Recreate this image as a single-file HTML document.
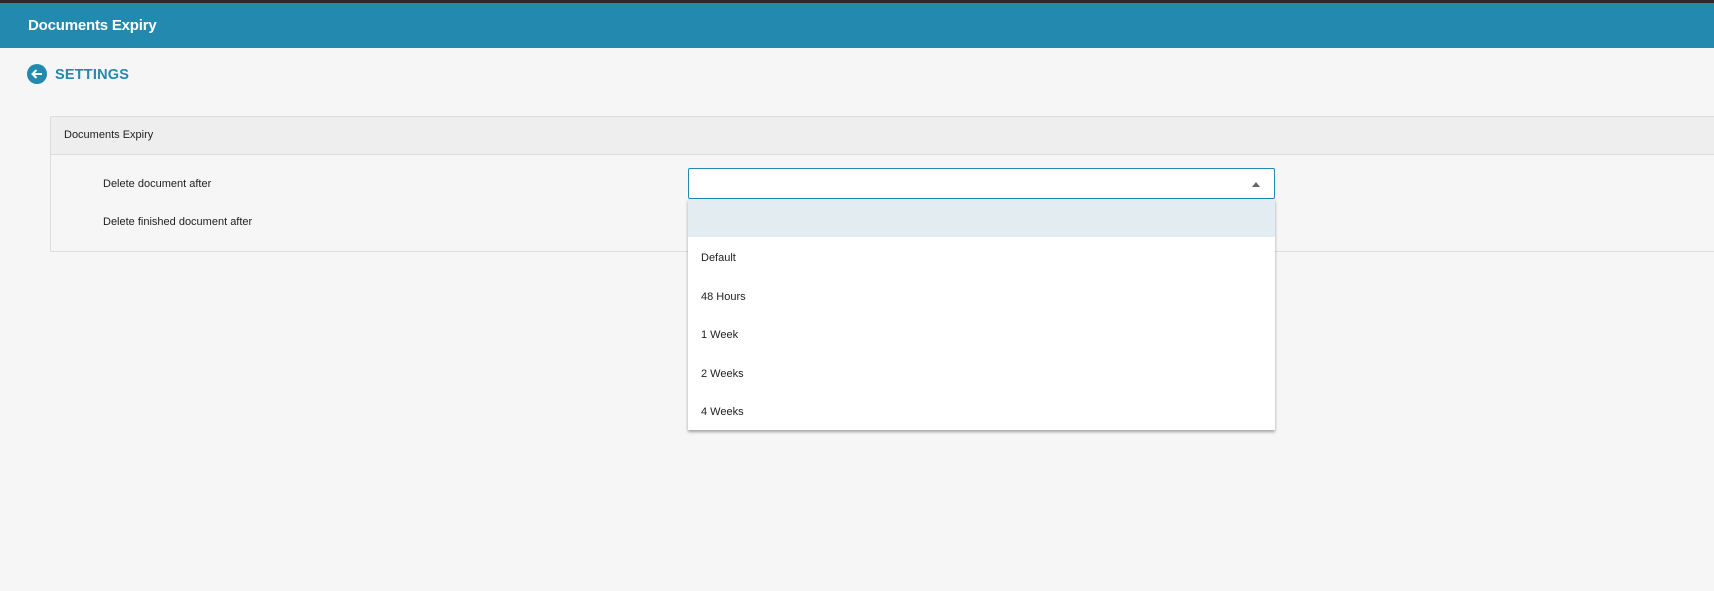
<!DOCTYPE html>
<html><head><meta charset="utf-8"><style>
*{box-sizing:border-box;margin:0;padding:0}
body{width:1714px;height:591px;background:#f6f6f6;font-family:"Liberation Sans",sans-serif;position:relative;overflow:hidden;color:#222}
.top{position:absolute;left:0;top:0;width:1714px;height:3px;background:#2b2b2b}
.hdr{position:absolute;left:0;top:3px;width:1714px;height:45px;background:#2389ae}
.hdr span{position:absolute;left:28px;top:14px;color:#fff;font-size:15px;font-weight:bold;letter-spacing:-0.2px}
.back{position:absolute;left:27px;top:64px;width:20px;height:20px;border-radius:50%;background:#2389ae}
.set{position:absolute;left:55px;top:67px;color:#2389ae;font-size:14.5px;font-weight:bold;letter-spacing:0.2px}
.panel{position:absolute;left:50px;top:116px;width:1680px;height:136px;border:1px solid #ddd;border-radius:2px;background:#f6f6f6}
.ph{height:38px;background:#eeeeee;border-bottom:1px solid #ddd;font-size:11px;padding:12px 0 0 13px}
.lbl{position:absolute;left:52px;font-size:11px}
.sel{position:absolute;left:688px;top:168px;width:587px;height:31px;border:1px solid #2389ae;border-radius:2px;background:#fff}
.sel i{position:absolute;right:14px;top:13px;width:0;height:0;border-left:4px solid transparent;border-right:4px solid transparent;border-bottom:5px solid #666}
.dd{position:absolute;left:688px;top:199px;width:587px;height:231px;background:#fff;box-shadow:0 2px 3px rgba(0,0,0,.35)}
.it{height:38.4px;font-size:11px;padding:15px 0 0 13px}
</style></head><body>
<div class="top"></div>
<div class="hdr"><span>Documents Expiry</span></div>
<div class="back"><svg width="20" height="20" viewBox="0 0 20 20"><path d="M15 10H5.5M9.5 6L5.5 10L9.5 14" stroke="#fff" stroke-width="2" fill="none"/></svg></div>
<div class="set">SETTINGS</div>
<div class="panel"><div class="ph">Documents Expiry</div>
<div class="lbl" style="top:61px">Delete document after</div>
<div class="lbl" style="top:99px">Delete finished document after</div>
</div>
<div class="sel"><i></i></div>
<div class="dd">
<div class="it" style="background:#e2ecf1"></div>
<div class="it">Default</div>
<div class="it">48 Hours</div>
<div class="it">1 Week</div>
<div class="it">2 Weeks</div>
<div class="it">4 Weeks</div>
</div>
</body></html>
